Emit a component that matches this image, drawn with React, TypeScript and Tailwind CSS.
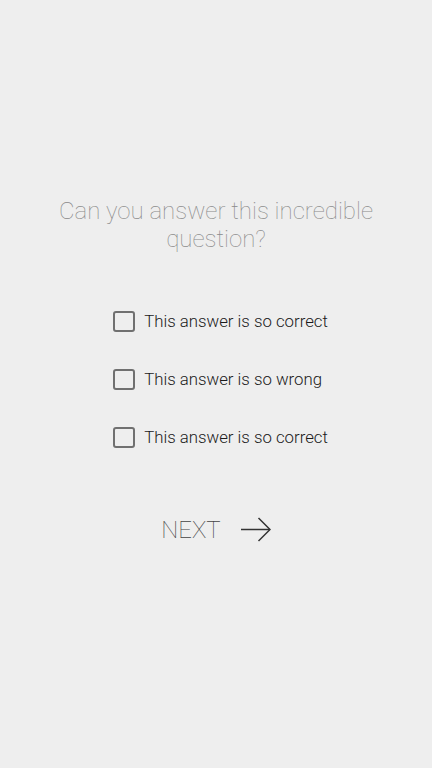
import React from "react";

const answers = [
  "This answer is so correct",
  "This answer is so wrong",
  "This answer is so correct",
];

export default function App() {
  return (
    <div
      className="min-h-[768px] w-full bg-[#eeeeee] flex flex-col items-center pt-[197px]"
      style={{ fontFamily: "Roboto, 'Noto Sans', sans-serif" }}
    >
      <h1 className="text-[24px] leading-[28px] font-thin text-[#8a8a8a] text-center px-[50px]">
        Can you answer this incredible question?
      </h1>
      <div className="mt-[56px] flex flex-col gap-[34px] pl-[9px]">
        {answers.map((a, i) => (
          <label key={i} className="flex items-center h-[24px] gap-[9px]">
            <span className="w-[22px] h-[21px] border-[2.5px] border-[#707070] rounded-[3px] box-border" />
            <span className="text-[16.8px] font-light text-[#1a1a1a] leading-[24px]">{a}</span>
          </label>
        ))}
      </div>
      <button className="mt-[67px] flex items-center gap-[20px] h-[28px]">
        <span className="text-[24px] font-thin text-[#444444] leading-[28px]">NEXT</span>
        <svg width="30" height="26" viewBox="0 0 30 26" fill="none" stroke="#333" strokeWidth="1.5">
          <path d="M0 12.5H29" />
          <path d="M17.5 1L29 12.5L17.5 24" />
        </svg>
      </button>
    </div>
  );
}
